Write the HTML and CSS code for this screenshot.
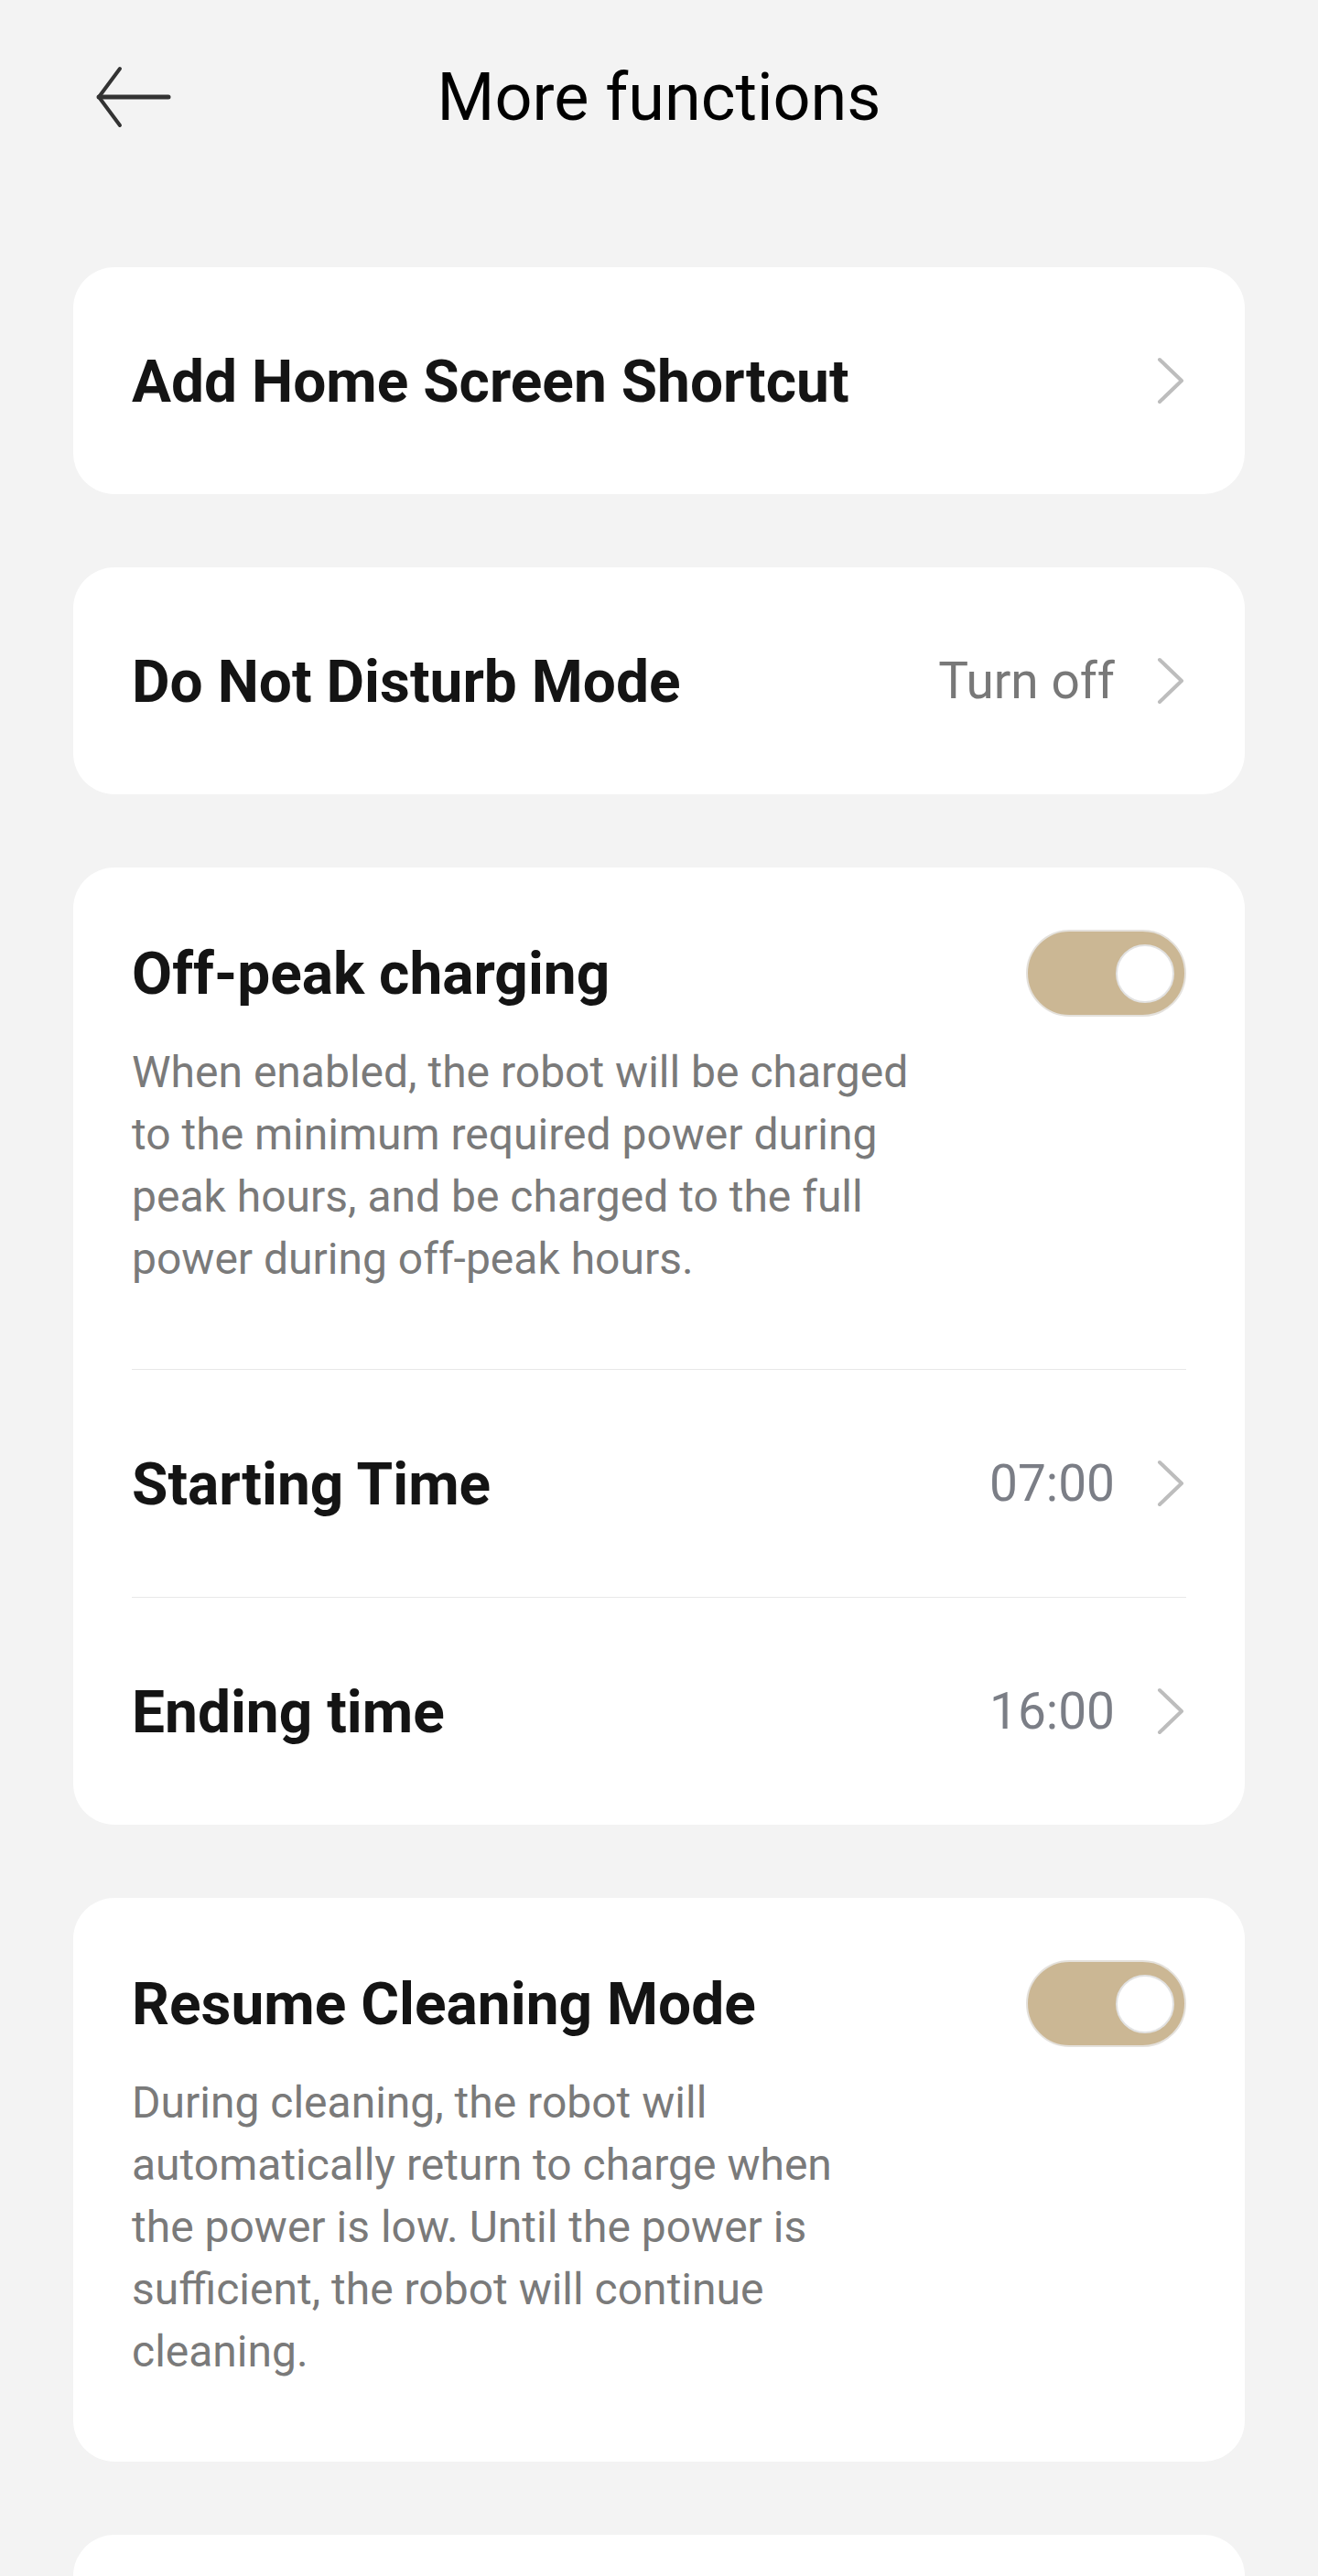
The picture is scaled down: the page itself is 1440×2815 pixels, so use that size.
FILE: index.html
```html
<!DOCTYPE html>
<html>
<head>
    <meta charset="UTF-8">
    <meta name="viewport" content="width=device-width, initial-scale=1.0">
    <title>More functions</title>
    <link rel="stylesheet" href="styles.css">
</head>
<body>
    <header class="top-bar">
        <button class="back-btn" aria-label="Back">
            <svg width="84" height="68" viewBox="0 0 84 68">
                <polyline points="27,3 4,34 27,65" fill="none" stroke="#333" stroke-width="4" stroke-linecap="round" stroke-linejoin="round"/>
                <line x1="4" y1="34" x2="80" y2="34" stroke="#333" stroke-width="5" stroke-linecap="round"/>
            </svg>
        </button>
        <h1 class="page-title">More functions</h1>
        <span></span>
    </header>

    <main class="list">
        <section class="card">
            <div class="row">
                <span class="row-title">Add Home Screen Shortcut</span>
                <span class="row-end">
                    <svg class="chevron" width="32" height="52" viewBox="0 0 32 52"><polyline points="3,3 27,26 3,49"/></svg>
                </span>
            </div>
        </section>

        <section class="card">
            <div class="row">
                <span class="row-title">Do Not Disturb Mode</span>
                <span class="row-end">
                    <span class="value">Turn off</span>
                    <svg class="chevron" width="32" height="52" viewBox="0 0 32 52"><polyline points="3,3 27,26 3,49"/></svg>
                </span>
            </div>
        </section>

        <section class="card">
            <div class="toggle-block">
                <div class="toggle-head">
                    <span class="row-title">Off-peak charging</span>
                    <span class="switch on"><span class="knob"></span></span>
                </div>
                <p class="desc">When enabled, the robot will be charged<br>to the minimum required power during<br>peak hours, and be charged to the full<br>power during off-peak hours.</p>
            </div>
            <div class="row">
                <span class="row-title">Starting Time</span>
                <span class="row-end">
                    <span class="value time">07:00</span>
                    <svg class="chevron" width="32" height="52" viewBox="0 0 32 52"><polyline points="3,3 27,26 3,49"/></svg>
                </span>
            </div>
            <div class="row">
                <span class="row-title">Ending time</span>
                <span class="row-end">
                    <span class="value time">16:00</span>
                    <svg class="chevron" width="32" height="52" viewBox="0 0 32 52"><polyline points="3,3 27,26 3,49"/></svg>
                </span>
            </div>
        </section>

        <section class="card">
            <div class="toggle-block">
                <div class="toggle-head">
                    <span class="row-title">Resume Cleaning Mode</span>
                    <span class="switch on"><span class="knob"></span></span>
                </div>
                <p class="desc">During cleaning, the robot will<br>automatically return to charge when<br>the power is low. Until the power is<br>sufficient, the robot will continue<br>cleaning.</p>
            </div>
        </section>

        <section class="card">
            <div class="row"></div>
        </section>
    </main>
</body>
</html>
```

FILE: styles.css
```css
body {
    font-family: Roboto, "Noto Sans", sans-serif;
    margin: 0;
    padding: 0;
    background-color: #f3f3f3;
    color: #111;
}
.top-bar {
    height: 212px;
    display: grid;
    grid-template-columns: 1fr auto 1fr;
    align-items: center;
}
.back-btn {
    justify-self: start;
    margin-left: 104px;
    padding: 0;
    border: none;
    background: none;
    display: flex;
}
.page-title {
    margin: 0;
    font-size: 72px;
    font-weight: 400;
    color: #000;
}
.list {
    display: flex;
    flex-direction: column;
    gap: 80px;
    padding: 80px 80px 0;
}
.card {
    background: white;
    border-radius: 45px;
    padding: 0 64px;
}
.row {
    height: 248px;
    display: flex;
    align-items: center;
    justify-content: space-between;
}
.row + .row,
.toggle-block + .row {
    border-top: 1px solid #e8e8e8;
}
.row-title {
    font-size: 64px;
    font-weight: 700;
    color: #141414;
    position: relative;
    top: 1px;
}
.row-end {
    display: flex;
    align-items: center;
    gap: 46px;
}
.value {
    font-size: 55px;
    color: #787878;
}
.value.time {
    color: #7b7e86;
}
.chevron polyline {
    fill: none;
    stroke: #bdbdbd;
    stroke-width: 4;
    stroke-linecap: round;
    stroke-linejoin: round;
}
.toggle-block {
    padding: 68px 0 86px;
}
.toggle-head {
    height: 95px;
    display: flex;
    align-items: center;
    justify-content: space-between;
}
.switch {
    box-sizing: border-box;
    width: 175px;
    height: 95px;
    border-radius: 48px;
    border: 2px solid #e4e1dc;
    background: #cbb794;
    display: flex;
    align-items: center;
    justify-content: flex-end;
    padding-right: 11px;
}
.knob {
    box-sizing: border-box;
    width: 64px;
    height: 64px;
    border-radius: 50%;
    border: 2px solid #e2e2e2;
    background: white;
}
.desc {
    margin: 27px 0 0;
    font-size: 48px;
    line-height: 68px;
    color: #7a7a7a;
}
```
